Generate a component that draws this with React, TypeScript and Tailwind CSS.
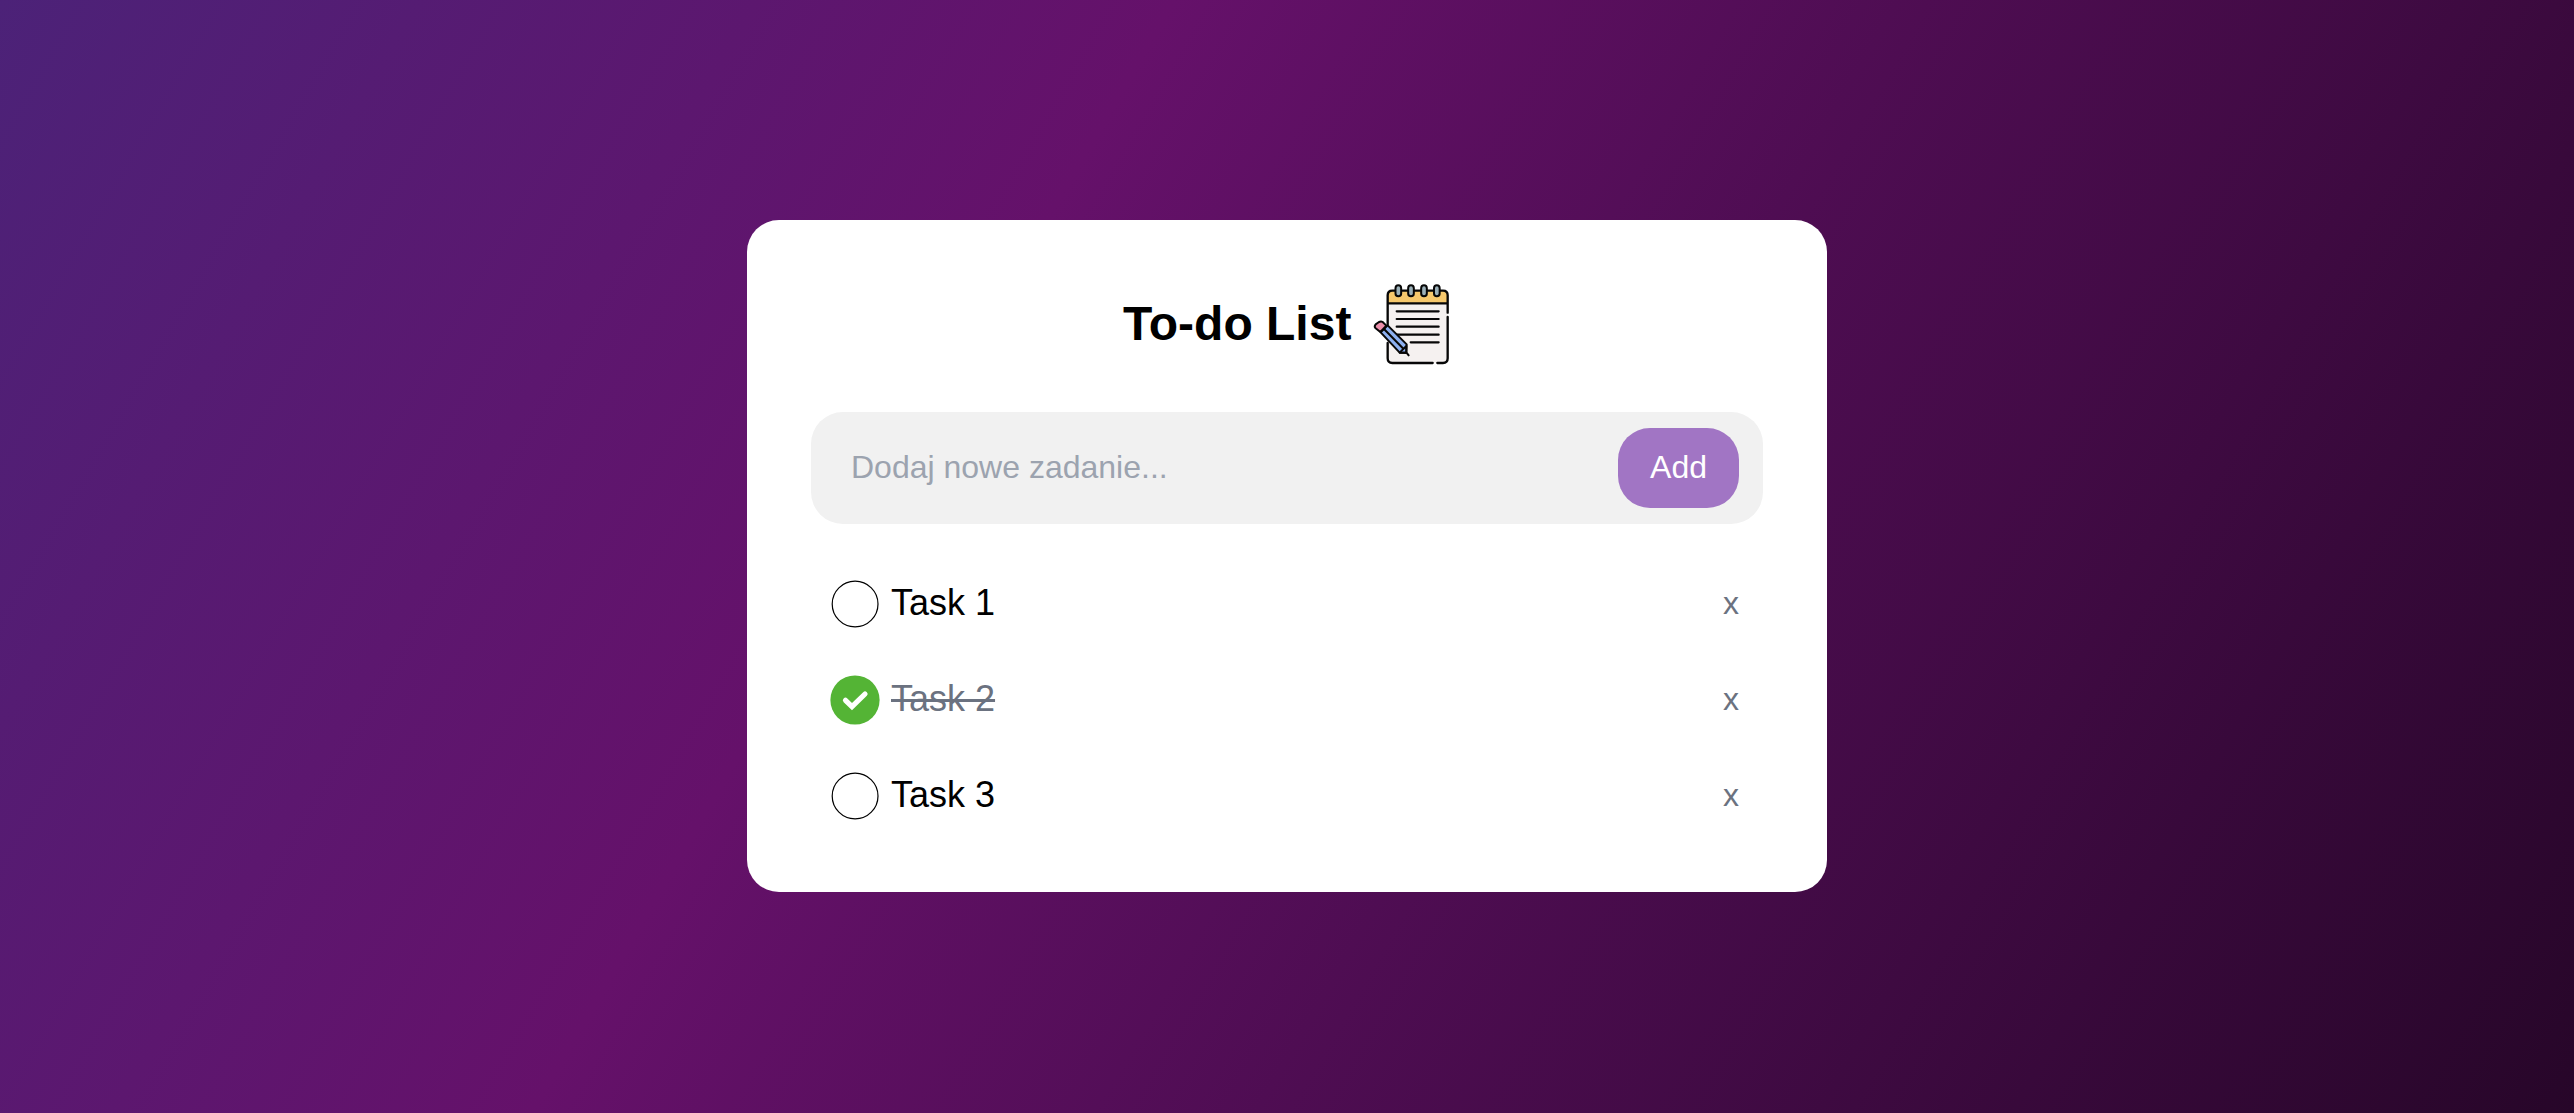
const tasks = [
  { id: 1, name: "Task 1", done: false },
  { id: 2, name: "Task 2", done: true },
  { id: 3, name: "Task 3", done: false },
];

function NotebookIcon() {
  return (
    <svg className="h-[104px] w-[104px] shrink-0" viewBox="0 -1 312 312" fill="none" stroke="#070707" strokeWidth="7" strokeLinecap="round" strokeLinejoin="round">
      <path d="M83 84V264Q83 278 97 278H249Q263 278 263 264V76Q263 61 249 61H97Q83 61 83 76Z" fill="#f5f1f0" stroke="none" />
      <path d="M83 99V75Q83 61 97 61H249Q263 61 263 75V99Z" fill="#f6c86c" stroke="none" />
      <path d="M83 163V75Q83 61 97 61H249Q263 61 263 75V127M263 140V264Q263 278 249 278H232M218 278H97Q83 278 83 264V218M83 99H263" />
      <g fill="#9bb0b8" strokeWidth="6">
        <rect x="106.500" y="45" width="17" height="33" rx="8.500" />
        <rect x="144.500" y="45" width="17" height="33" rx="8.500" />
        <rect x="183.500" y="45" width="17" height="33" rx="8.500" />
        <rect x="222" y="45" width="17" height="33" rx="8.500" />
      </g>
      <path d="M110 123H236M110 146H236M110 169H236M110 193H236M152 216H236" strokeWidth="6.5" />
      <path d="M62 186L83 165L140 222L139 246L119 247Z" fill="#8db0f0" strokeWidth="6" />
      <path d="M46 173Q42 168 47 162L57 155Q63 152 68 155L79 166L61 185Z" fill="#ec8fab" strokeWidth="6" />
      <path d="M72 176L128 233M119 247L139 227V248ZM139 246L146 255" strokeWidth="6" />
    </svg>
  );
}

function TaskToggle({ done }: { done: boolean }) {
  return (
    <svg className="h-[50px] w-[50px]" viewBox="0 0 50 50" fill="none">
      {done ? (
        <>
          <circle cx="25" cy="25" r="24.6" fill="#54b435" />
          <path d="M15.5 25.3L22 31.7L35 19" stroke="#fff" strokeWidth="5.2" strokeLinecap="round" strokeLinejoin="miter" />
        </>
      ) : (
        <circle cx="25.1" cy="25" r="22.9" stroke="#000" strokeWidth="1.2" />
      )}
    </svg>
  );
}

export default function App() {
  return (
    <main className="flex h-screen items-center justify-center bg-[linear-gradient(120deg,#4c2278_0%,#65116a_36.5%,#270629_100%)] pb-px font-['Liberation_Sans',Arial,sans-serif]">
      <section className="flex h-[672px] w-[1080px] flex-col rounded-[32px] bg-white px-16 pt-[50px]">
        <header className="flex h-[104px] items-center pl-[312px]">
          <h1 className="w-[237px] pt-1 text-[48px] leading-[56px] font-bold whitespace-nowrap text-black">To-do List</h1>
          <NotebookIcon />
        </header>
        <form className="mt-[38px] flex h-28 shrink-0 items-center rounded-[32px] bg-[#f1f1f1] pr-6 pl-10" onSubmit={(e) => e.preventDefault()}>
          <input className="min-w-0 flex-1 pb-0.5 text-[32px] leading-10 outline-none placeholder:text-[#9ca3af]" placeholder="Dodaj nowe zadanie..." />
          <button className="h-20 rounded-[32px] bg-[#a175c4] px-8 pb-0.5 text-[32px] leading-10 text-white">Add</button>
        </form>
        <ul className="mt-8">
          {tasks.map((task) => (
            <li key={task.id} className="flex h-24 items-center pr-6 pl-[19px]">
              <TaskToggle done={task.done} />
              <span className={task.done ? "ml-[11px] pb-0.5 text-[36px] leading-[56px] text-[#6b7280] line-through decoration-[3px]" : "ml-[11px] pb-0.5 text-[36px] leading-[56px] text-black"}>
                {task.name}
              </span>
              <button className="ml-auto pb-0.5 text-[32px] leading-10 text-[#6b7280]">x</button>
            </li>
          ))}
        </ul>
      </section>
    </main>
  );
}
